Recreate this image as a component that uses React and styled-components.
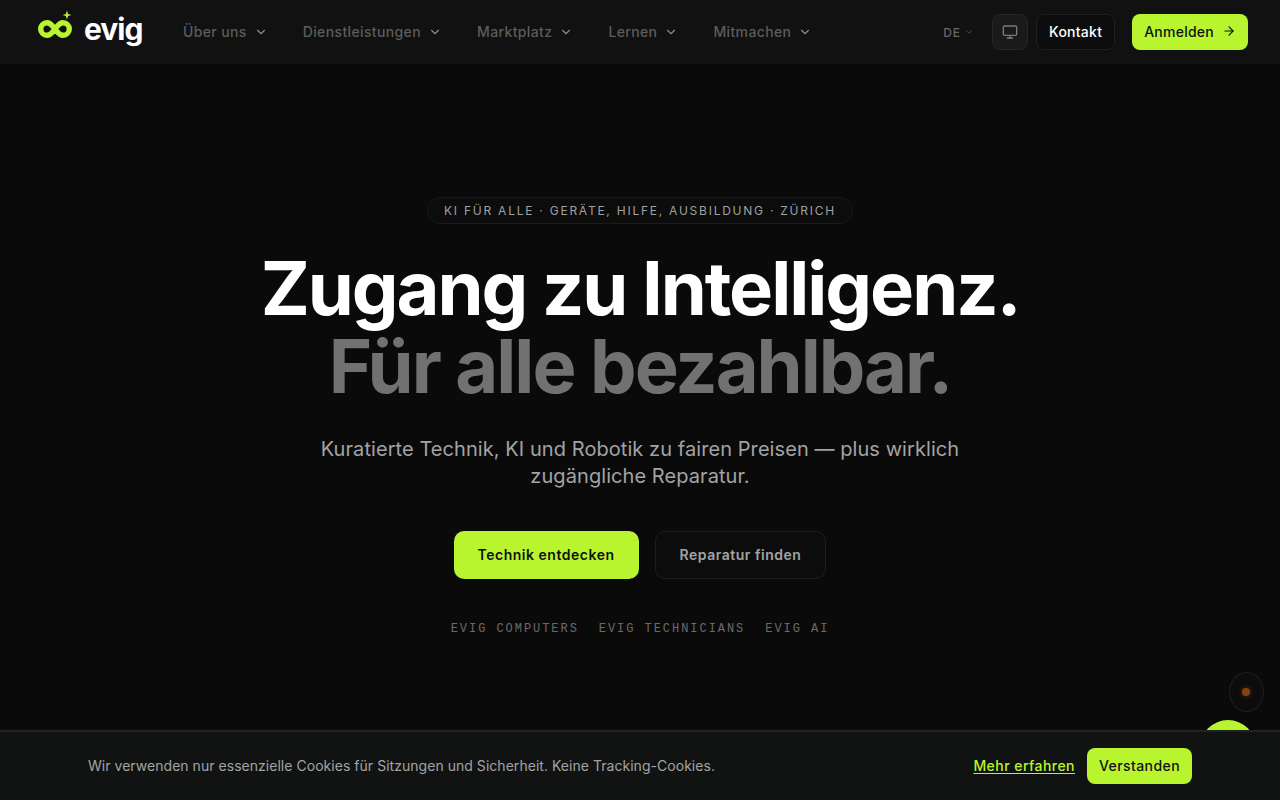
import React from 'react'
import styled, { createGlobalStyle } from 'styled-components'
import { ChevronDown, Monitor, ArrowRight } from 'lucide-react'

const lime = '#b8f52e'

const GlobalStyle = createGlobalStyle`
  html, body {
    margin: 0;
    height: 100%;
    background: #0a0a0a;
    overflow: hidden;
  }
  body {
    font-family: Inter, "Noto Sans", sans-serif;
    color: #fff;
  }
  * { box-sizing: border-box; }
`

const Page = styled.div`
  height: 800px;
  display: flex;
  flex-direction: column;
`

const Header = styled.header`
  height: 64px;
  flex: none;
  background: #111111;
  display: flex;
  align-items: center;
  padding: 0 32px 0 38px;
`

const Logo = styled.a`
  display: flex;
  align-items: center;
  gap: 12px;
  width: 145px;
  flex: none;
`

const LogoText = styled.span`
  font-size: 30px;
  font-weight: 700;
  letter-spacing: -1px;
  line-height: 1;
  color: #fff;
  margin-top: -7px;
`

const Nav = styled.nav`
  display: flex;
  gap: 35px;
  flex: 1;
`

const NavItem = styled.a`
  display: flex;
  align-items: center;
  gap: 7px;
  font-size: 14px;
  line-height: 20px;
  font-weight: 500;
  letter-spacing: 0.37px;
  color: #5c5c5c;
  margin-top: -1px;
  svg { color: #8a8a8a; }
`

const HeaderRight = styled.div`
  display: flex;
  align-items: center;
`

const Lang = styled.span`
  display: flex;
  align-items: center;
  gap: 3px;
  font-size: 12px;
  font-weight: 500;
  letter-spacing: 1px;
  color: #666;
  margin-right: 18px;
  svg { color: #555; }
`

const IconButton = styled.span`
  width: 36px;
  height: 36px;
  border-radius: 8px;
  background: #1a1a1a;
  border: 1px solid #262626;
  color: #7a7a7a;
  display: flex;
  align-items: center;
  justify-content: center;
  margin-right: 8px;
`

const KontaktButton = styled.a`
  height: 36px;
  padding: 0 12px 2px;
  border-radius: 8px;
  background: #0d0d0d;
  border: 1px solid #1f1f1f;
  font-size: 14px;
  font-weight: 500;
  letter-spacing: 0.25px;
  color: #fff;
  display: flex;
  align-items: center;
  margin-right: 17px;
`

const LoginButton = styled.a`
  height: 36px;
  padding: 0 12px 2px;
  border-radius: 8px;
  background: ${lime};
  font-size: 14px;
  font-weight: 500;
  letter-spacing: 0.25px;
  color: #111;
  display: flex;
  align-items: center;
  gap: 8px;
`

const Hero = styled.main`
  flex: 1;
  display: flex;
  flex-direction: column;
  align-items: center;
  padding-top: 133px;
`

const Pill = styled.div`
  height: 27px;
  padding: 0 16px;
  border: 1px solid #1a1a1a;
  border-radius: 14px;
  background: #0c0c0c;
  display: flex;
  align-items: center;
  font-size: 12px;
  font-weight: 400;
  letter-spacing: 1.76px;
  color: #a0a0a0;
`

const Title = styled.h1`
  margin: 25px 0 0;
  font-family: Inter, sans-serif;
  font-size: 74px;
  line-height: 78px;
  font-weight: 700;
  letter-spacing: -2px;
  text-align: center;
  color: #fff;
`

const TitleMuted = styled.span`
  display: block;
  color: #717171;
`

const Lead = styled.p`
  margin: 31px 0 0;
  width: 680px;
  font-size: 20px;
  line-height: 27px;
  font-weight: 400;
  letter-spacing: 0.07px;
  text-align: center;
  color: #a3a3a3;
`

const Actions = styled.div`
  display: flex;
  gap: 16px;
  margin-top: 41px;
`

const PrimaryAction = styled.a`
  height: 48px;
  padding: 0 24px 2px;
  border-radius: 10px;
  background: ${lime};
  color: #111;
  font-size: 14px;
  font-weight: 600;
  letter-spacing: 0.52px;
  display: flex;
  align-items: center;
`

const SecondaryAction = styled(PrimaryAction)`
  background: #0c0c0c;
  border: 1px solid #1e1e1e;
  color: #a3a3a3;
`

const Brands = styled.div`
  display: flex;
  gap: 20px;
  margin-top: 43px;
  font-family: "Liberation Mono", monospace;
  font-size: 12px;
  letter-spacing: 1.95px;
  color: #6a6a6a;
`

const CookieBar = styled.div`
  position: fixed;
  left: 0;
  right: 0;
  bottom: 0;
  height: 70px;
  background: #111312;
  border-top: 2px solid #222;
  padding: 0 88px;
  display: flex;
  align-items: center;
  justify-content: space-between;
  z-index: 3;
`

const CookieText = styled.span`
  font-size: 14px;
  letter-spacing: 0.035px;
  color: #a3a3a3;
  margin-top: -2px;
`

const CookieActions = styled.div`
  display: flex;
  align-items: center;
  gap: 12px;
`

const CookieLink = styled.a`
  font-size: 14px;
  font-weight: 500;
  letter-spacing: 0.45px;
  color: ${lime};
  text-decoration: underline;
  text-underline-offset: 2px;
  margin-top: -2px;
`

const CookieButton = styled.a`
  height: 36px;
  padding: 0 12px 2px;
  border-radius: 8px;
  background: ${lime};
  color: #111;
  font-size: 14px;
  font-weight: 500;
  letter-spacing: 0.42px;
  display: flex;
  align-items: center;
`

const StatusBubble = styled.div`
  position: fixed;
  left: 1229px;
  top: 672px;
  width: 35px;
  height: 40px;
  border-radius: 50%;
  background: #0c0c0c;
  border: 1px solid #1f1f1f;
  display: flex;
  align-items: center;
  justify-content: center;
  padding-right: 2px;
  &::after {
    content: '';
    width: 8px;
    height: 8px;
    border-radius: 50%;
    background: #8a3f12;
    box-shadow: 0 0 5px rgba(160, 75, 20, 0.5);
  }
`

const ChatBubble = styled.div`
  position: fixed;
  left: 1200px;
  top: 720px;
  width: 56px;
  height: 56px;
  border-radius: 50%;
  background: ${lime};
  z-index: 2;
`

const navItems = ['Über uns', 'Dienstleistungen', 'Marktplatz', 'Lernen', 'Mitmachen']

function InfinityMark() {
  return (
    <svg width="34" height="44" viewBox="0 0 34 44" fill="none">
      <path
        d="M17 19C14 15.500 12.800 12.700 9 12.700A6.300 6.300 0 0 0 9 25.300C12.800 25.300 14 22.500 17 19C20 15.500 21.200 12.700 25 12.700A6.300 6.300 0 0 1 25 25.300C21.200 25.300 20 22.500 17 19Z"
        stroke={lime}
        strokeWidth="5.400"
      />
      <path d="M29 0.500l1.100 3.400 3.400 1.100-3.400 1.100-1.100 3.400-1.100-3.400-3.400-1.100 3.400-1.100Z" fill={lime} />
    </svg>
  )
}

export default function App() {
  return (
    <Page>
      <GlobalStyle />
      <Header>
        <Logo>
          <InfinityMark />
          <LogoText>evig</LogoText>
        </Logo>
        <Nav>
          {navItems.map((item) => (
            <NavItem key={item}>
              {item}
              <ChevronDown size={14} />
            </NavItem>
          ))}
        </Nav>
        <HeaderRight>
          <Lang>
            DE
            <ChevronDown size={10} />
          </Lang>
          <IconButton>
            <Monitor size={16} />
          </IconButton>
          <KontaktButton>Kontakt</KontaktButton>
          <LoginButton>
            Anmelden
            <ArrowRight size={14} />
          </LoginButton>
        </HeaderRight>
      </Header>
      <Hero>
        <Pill>KI FÜR ALLE · GERÄTE, HILFE, AUSBILDUNG · ZÜRICH</Pill>
        <Title>
          Zugang zu Intelligenz.
          <TitleMuted>Für alle bezahlbar.</TitleMuted>
        </Title>
        <Lead>Kuratierte Technik, KI und Robotik zu fairen Preisen — plus wirklich zugängliche Reparatur.</Lead>
        <Actions>
          <PrimaryAction>Technik entdecken</PrimaryAction>
          <SecondaryAction>Reparatur finden</SecondaryAction>
        </Actions>
        <Brands>
          <span>EVIG COMPUTERS</span>
          <span>EVIG TECHNICIANS</span>
          <span>EVIG AI</span>
        </Brands>
      </Hero>
      <StatusBubble />
      <ChatBubble />
      <CookieBar>
        <CookieText>Wir verwenden nur essenzielle Cookies für Sitzungen und Sicherheit. Keine Tracking-Cookies.</CookieText>
        <CookieActions>
          <CookieLink>Mehr erfahren</CookieLink>
          <CookieButton>Verstanden</CookieButton>
        </CookieActions>
      </CookieBar>
    </Page>
  )
}
